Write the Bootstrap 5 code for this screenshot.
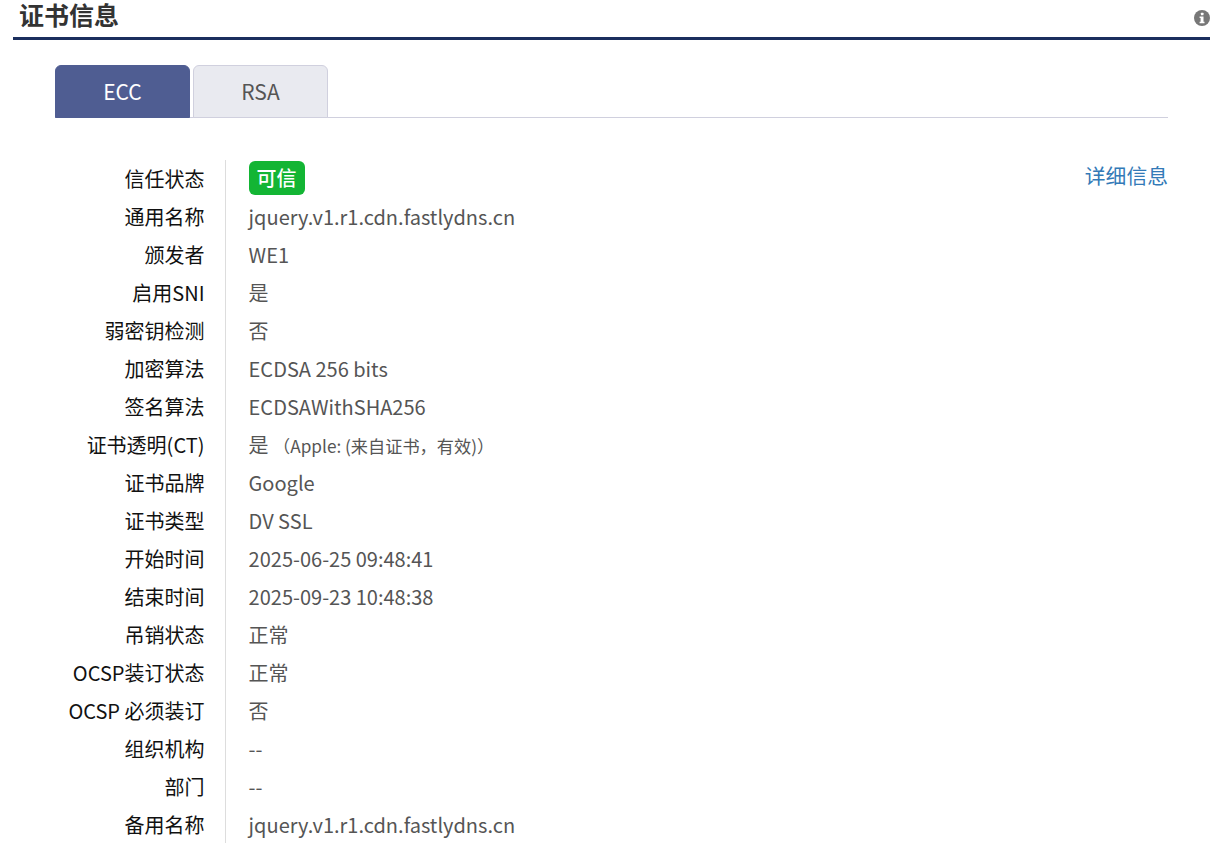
<!DOCTYPE html>
<html lang="zh-CN">
<head>
<meta charset="utf-8">
<title>证书信息</title>
<link rel="stylesheet" href="https://cdn.jsdelivr.net/npm/bootstrap@5.3.0/dist/css/bootstrap.min.css">
<style>
html,body{overflow:hidden}
body{font-family:"Noto Sans CJK SC",sans-serif;color:#555;background:#fff}
.sec-wrap{padding:0 17px 0 13px}
.sec-head{height:40px;border-bottom:3px solid #1b2f5e;padding-left:6px;padding-top:0}
.sec-title{font-size:25px;font-weight:700;color:#333;line-height:28px;margin:0}
.info-ico{width:16px;height:16px;margin-top:10px}
.sec-body{padding:25px 42px 0}
.tabbar{border-bottom:1px solid #d0d0de;gap:3px;height:53px}
.tabbar .nav-link{width:135px;height:53px;margin-bottom:-1px;padding:0;display:flex;align-items:center;justify-content:center;font-size:21px;color:#555;background:#e9eaf0;border:1px solid #d0d0de;border-bottom-color:#d0d0de;border-radius:6px 6px 0 0}
.tabbar .nav-link.active{background:#4f5d92;color:#fff;border-color:#4f5d92}
.kv-list{margin:42px 0 0;width:100%}
.kv-row{height:38px;font-size:20px;line-height:38px;margin:0}
.kv-row:last-child{height:37px}
.kv-key{width:149.5px;flex:none;text-align:right;color:#111;margin:0;font-weight:400;padding-right:0;white-space:nowrap}
.kv-val{flex:1;margin:0 0 0 20.5px;padding-left:22.6px;border-left:1px solid #ddd;white-space:nowrap;color:#555}
.kv-val small{font-size:17.2px}
.ok-tag{display:inline-flex;align-items:center;justify-content:center;width:56px;height:34px;background:#13b534;color:#fff;border-radius:6px;font-weight:500;line-height:1;vertical-align:top;margin-top:1px}
.more-link{color:#337ab7;text-decoration:none;line-height:30px;font-size:20.8px}
</style>
</head>
<body>
<div class="sec-wrap">
  <div class="sec-head d-flex justify-content-between align-items-start">
    <h2 class="sec-title">证书信息</h2>
    <svg class="info-ico" viewBox="0 0 16 16" aria-hidden="true"><circle cx="8" cy="8" r="8" fill="#777"/><rect x="6.9" y="2.8" width="2.6" height="2.5" rx=".5" fill="#fff"/><path d="M5.6 6.6h3.9v5.1h1v1.5H5.6v-1.5h1v-3.6h-1z" fill="#fff"/></svg>
  </div>
  <div class="sec-body">
    <ul class="nav tabbar">
      <li class="nav-item"><a class="nav-link active" href="#">ECC</a></li>
      <li class="nav-item"><a class="nav-link" href="#">RSA</a></li>
    </ul>
    <dl class="kv-list">
      <div class="kv-row d-flex"><dt class="kv-key">信任状态</dt><dd class="kv-val d-flex justify-content-between"><span class="ok-tag">可信</span><a class="more-link" href="#">详细信息</a></dd></div>
      <div class="kv-row d-flex"><dt class="kv-key">通用名称</dt><dd class="kv-val">jquery.v1.r1.cdn.fastlydns.cn</dd></div>
      <div class="kv-row d-flex"><dt class="kv-key">颁发者</dt><dd class="kv-val">WE1</dd></div>
      <div class="kv-row d-flex"><dt class="kv-key">启用SNI</dt><dd class="kv-val">是</dd></div>
      <div class="kv-row d-flex"><dt class="kv-key">弱密钥检测</dt><dd class="kv-val">否</dd></div>
      <div class="kv-row d-flex"><dt class="kv-key">加密算法</dt><dd class="kv-val">ECDSA 256 bits</dd></div>
      <div class="kv-row d-flex"><dt class="kv-key">签名算法</dt><dd class="kv-val">ECDSAWithSHA256</dd></div>
      <div class="kv-row d-flex"><dt class="kv-key">证书透明(CT)</dt><dd class="kv-val">是 <small>（Apple: (来自证书，有效)）</small></dd></div>
      <div class="kv-row d-flex"><dt class="kv-key">证书品牌</dt><dd class="kv-val">Google</dd></div>
      <div class="kv-row d-flex"><dt class="kv-key">证书类型</dt><dd class="kv-val">DV SSL</dd></div>
      <div class="kv-row d-flex"><dt class="kv-key">开始时间</dt><dd class="kv-val">2025-06-25 09:48:41</dd></div>
      <div class="kv-row d-flex"><dt class="kv-key">结束时间</dt><dd class="kv-val">2025-09-23 10:48:38</dd></div>
      <div class="kv-row d-flex"><dt class="kv-key">吊销状态</dt><dd class="kv-val">正常</dd></div>
      <div class="kv-row d-flex"><dt class="kv-key">OCSP装订状态</dt><dd class="kv-val">正常</dd></div>
      <div class="kv-row d-flex"><dt class="kv-key">OCSP 必须装订</dt><dd class="kv-val">否</dd></div>
      <div class="kv-row d-flex"><dt class="kv-key">组织机构</dt><dd class="kv-val">--</dd></div>
      <div class="kv-row d-flex"><dt class="kv-key">部门</dt><dd class="kv-val">--</dd></div>
      <div class="kv-row d-flex"><dt class="kv-key">备用名称</dt><dd class="kv-val">jquery.v1.r1.cdn.fastlydns.cn</dd></div>
    </dl>
  </div>
</div>
<script src="https://cdn.jsdelivr.net/npm/bootstrap@5.3.0/dist/js/bootstrap.bundle.min.js"></script>
</body>
</html>
